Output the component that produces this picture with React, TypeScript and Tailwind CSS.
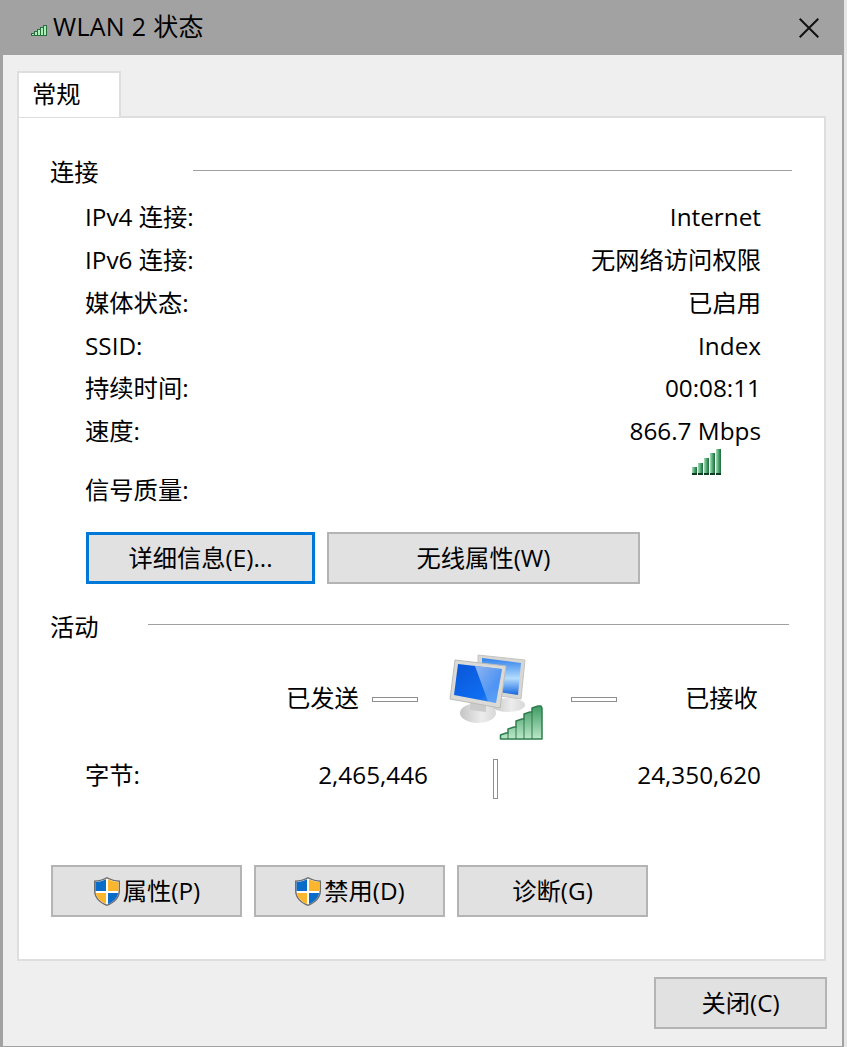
import React from 'react';

const FONT = "font-['Open_Sans','Noto_Sans_CJK_SC',sans-serif]";

function TitleSignal() {
  return (
    <svg className="w-[16px] h-[11px] mt-[6px] shrink-0" viewBox="0 0 16 11">
      {[2, 4, 6, 8, 10].map((h, i) => (
        <rect key={h} x={0.5 + i * 3} y={10.5 - h} width="3" height={h} fill="#a8f0b4" stroke="#2a6b3f" strokeWidth="1" />
      ))}
    </svg>
  );
}

function DarkSignal() {
  return (
    <svg className="w-[31px] h-[27px] -mt-[4px]" viewBox="0 0 31 27">
      <defs>
        <linearGradient id="sg" x1="0" y1="0" x2="1" y2="0">
          <stop offset="0" stopColor="#a9dcb7" />
          <stop offset="0.6" stopColor="#3f9a63" />
          <stop offset="1" stopColor="#1c6a3e" />
        </linearGradient>
      </defs>
      {[18, 14, 9, 4, 0].map((y, i) => (
        <g key={y}>
          <rect x={1 + i * 6} y={y} width="5" height={25 - y} fill="url(#sg)" />
          <rect x={1 + i * 6} y={24} width="5" height="2" fill="#0f3d24" />
        </g>
      ))}
    </svg>
  );
}

function NetworkIcon() {
  return (
    <svg className="w-[95px] h-[87px]" viewBox="0 0 95 87">
      <defs>
        <linearGradient id="front" x1="0" y1="0" x2="1" y2="1">
          <stop offset="0" stopColor="#0a55d8" />
          <stop offset="0.7" stopColor="#0f6ef0" />
          <stop offset="1" stopColor="#4f9cf5" />
        </linearGradient>
        <linearGradient id="back" x1="0" y1="0" x2="0" y2="1">
          <stop offset="0" stopColor="#2f80ec" />
          <stop offset="0.55" stopColor="#b4dcfd" />
          <stop offset="1" stopColor="#1668e0" />
        </linearGradient>
        <linearGradient id="glare" x1="0" y1="0" x2="1" y2="1">
          <stop offset="0" stopColor="#ffffff" stopOpacity="0.55" />
          <stop offset="1" stopColor="#ffffff" stopOpacity="0.1" />
        </linearGradient>
        <linearGradient id="bar" x1="0" y1="0" x2="0" y2="1">
          <stop offset="0" stopColor="#3f9a63" />
          <stop offset="1" stopColor="#bce8c9" />
        </linearGradient>
        <linearGradient id="foot" x1="0" y1="0" x2="1" y2="0">
          <stop offset="0" stopColor="#c4c4c4" />
          <stop offset="0.6" stopColor="#ececec" />
          <stop offset="1" stopColor="#d8d8d8" />
        </linearGradient>
      </defs>
      {/* back monitor */}
      <ellipse cx="60" cy="51" rx="17" ry="7" fill="url(#foot)" />
      <path d="M30 1 L77 6 L73 45 L52 42 L30 20 Z" fill="#d8d6d2" stroke="#c4c4c0" strokeWidth="1" />
      <path d="M34 4 L73 9 L70 41 L50 38 L34 20 Z" fill="url(#back)" />
      {/* front monitor */}
      <ellipse cx="30" cy="59" rx="18" ry="10" fill="url(#foot)" />
      <path d="M22 48 L38 50 L38 58 L22 56 Z" fill="#cbcbcb" />
      <path d="M7 6 L58 12 L52 54 L2 45 Z" fill="#dcdad6" stroke="#bcbcb8" strokeWidth="1" />
      <path d="M10 10 L54 15 L48 49 L6 41 Z" fill="url(#front)" />
      <path d="M27 12 L54 15 L48 49 L40 47.5 Z" fill="url(#glare)" />
      {/* signal */}
      <path
        d="M52.5 85 L52.5 81 L58 79 L60 79 L60 75 L66 73 L68 73 L68 67 L74 65 L76 65 L76 60 L82 58 L84 58 L84 54 L90 52 L93 52 L94 54 L94 85 Z"
        fill="url(#bar)"
        stroke="#2f7d4e"
        strokeWidth="1.5"
        strokeLinejoin="round"
      />
      {[60, 68, 76, 84].map((x, i) => (
        <path key={x} d={`M${x} ${[79, 73, 65, 58][i]} L${x} 85`} stroke="#2f7d4e" strokeWidth="1" />
      ))}
    </svg>
  );
}

function Shield() {
  return (
    <svg className="w-[28px] h-[31px] shrink-0" viewBox="0 0 28 31">
      <path d="M14 1 C10 3.5 5 4.5 1 4.5 L1 15 C1 22 7 27.5 14 30 C21 27.5 27 22 27 15 L27 4.5 C23 4.5 18 3.5 14 1 Z" fill="#6e6e6e" />
      <path d="M14 2.5 C10.5 4.6 6 5.6 2.5 5.8 L2.5 15 C2.5 21.5 8 26.5 14 28.5 C20 26.5 25.5 21.5 25.5 15 L25.5 5.8 C22 5.6 17.5 4.6 14 2.5 Z" fill="#ffffff" />
      <path d="M13 3.2 C10 4.8 6 5.8 2.5 6 L2.5 15 L13 15 Z" fill="#0a6cc9" />
      <path d="M15 3.2 C18 4.8 22 5.8 25.5 6 L25.5 15 L15 15 Z" fill="#fbb62d" />
      <path d="M2.7 17 L13 17 L13 28 C8 26 3.7 22 2.7 17 Z" fill="#fbb62d" />
      <path d="M15 17 L25.3 17 C24.3 22 20 26 15 28 Z" fill="#0a6cc9" />
    </svg>
  );
}

function Btn({ className, children, focus }: { className: string; children: React.ReactNode; focus?: boolean }) {
  return (
    <button
      className={`h-[52px] flex items-center justify-center bg-[#e1e1e1] text-[24.3px] text-black ${
        focus ? 'border-[3px] border-[#0078d7]' : 'border-2 border-[#b4b4b4]'
      } ${className}`}
    >
      {children}
    </button>
  );
}

const ROWS: [string, string][] = [
  ['IPv4 连接:', 'Internet'],
  ['IPv6 连接:', '无网络访问权限'],
  ['媒体状态:', '已启用'],
  ['SSID:', 'Index'],
  ['持续时间:', '00:08:11'],
  ['速度:', '866.7 Mbps'],
];

export default function App() {
  return (
    <div className="w-[847px] h-[1047px] bg-[#e6e6e6] overflow-hidden">
      <div className={`w-[844px] h-[1047px] flex flex-col bg-[#efefef] border-l-[3px] border-r-2 border-b-[1px] border-[#a2a2a2] text-black ${FONT}`}>
        {/* Title bar */}
        <div className="h-[55px] shrink-0 bg-[#a2a2a2] flex items-center pl-[28px] pr-[23px]">
          <TitleSignal />
          <span className="ml-[6px] -mt-[2px] text-[25px] tracking-[0.3px] leading-none">WLAN 2 状态</span>
          <svg className="ml-auto w-[20px] h-[20px]" viewBox="0 0 20 20">
            <path d="M0.7 0.7 L19.3 19.3 M19.3 0.7 L0.7 19.3" stroke="#111" strokeWidth="2" fill="none" />
          </svg>
        </div>

        {/* Tabs */}
        <div className="pt-[16px] pl-[14px] pr-[16px] flex flex-col">
          <div className="relative z-10 w-[104px] h-[46px] -mb-[1px] bg-white border-2 border-b-0 border-[#dedede] pl-[13px] text-[24.3px] leading-[41px]">
            常规
          </div>
          <div className="h-[845px] bg-white border-2 border-[#dedede] pl-[30px] pr-[32px] flex flex-col">
            {/* 连接 */}
            <div className="flex items-center h-[30px] mt-[39px]">
              <span className="ml-[1px] text-[24.3px] leading-none">连接</span>
              <div className="ml-[94px] mt-[-4px] flex-1 h-[1px] bg-[#a0a0a0]" />
            </div>
            <div className="pl-[36px] pr-[31px] mt-[9px] flex flex-col">
              {ROWS.map(([k, v]) => (
                <div key={k} className="h-[42.8px] flex items-center justify-between text-[24.3px] leading-none">
                  <span>{k}</span>
                  <span>{v}</span>
                </div>
              ))}
            </div>
            <div className="pl-[36px] pr-[70px] flex justify-between items-start">
              <span className="text-[24.3px] leading-none mt-[25px]">信号质量:</span>
              <DarkSignal />
            </div>
            <div className="flex gap-[12px] pl-[37px] mt-[30px]">
              <Btn focus className="w-[229px]">详细信息(E)...</Btn>
              <Btn className="w-[313px]">无线属性(W)</Btn>
            </div>

            {/* 活动 */}
            <div className="flex items-center h-[30px] mt-[28px]">
              <span className="ml-[1px] text-[24.3px] leading-none">活动</span>
              <div className="ml-[49px] mt-[-6px] flex-1 mr-[3px] h-[1px] bg-[#a0a0a0]" />
            </div>
            <div className="flex items-center mt-[12px] h-[87px] pl-[237px]">
              <span className="text-[24.3px] leading-none mt-[2px]">已发送</span>
              <div className="w-[46px] h-[5px] ml-[13px] mt-[4px] border border-[#8f8f8f] bg-white" />
              <div className="ml-[30px]">
                <NetworkIcon />
              </div>
              <div className="w-[46px] h-[5px] ml-[28px] mt-[4px] border border-[#8f8f8f] bg-white" />
              <span className="ml-[68px] text-[24.3px] leading-none mt-[2px]">已接收</span>
            </div>
            <div className="flex items-center h-[40px] mt-[18px] pl-[36px] text-[24.3px] leading-none">
              <span className="w-[150px] -mt-[8px]">字节:</span>
              <span className="w-[193px] text-right -mt-[8px]">2,465,446</span>
              <div className="w-[5px] h-[40px] ml-[65px] border border-[#8f8f8f] bg-white" />
              <span className="w-[263px] text-right -mt-[8px]">24,350,620</span>
            </div>
            <div className="flex gap-[12px] pl-[2px] mt-[66px]">
              <Btn className="w-[191px]">
                <Shield />
                <span className="ml-[2px]">属性(P)</span>
              </Btn>
              <Btn className="w-[191px]">
                <Shield />
                <span className="ml-[2px]">禁用(D)</span>
              </Btn>
              <Btn className="w-[191px]">诊断(G)</Btn>
            </div>
          </div>
        </div>

        {/* Footer */}
        <div className="flex justify-end pr-[15px] mt-[16px]">
          <Btn className="w-[173px]">关闭(C)</Btn>
        </div>
      </div>
    </div>
  );
}
